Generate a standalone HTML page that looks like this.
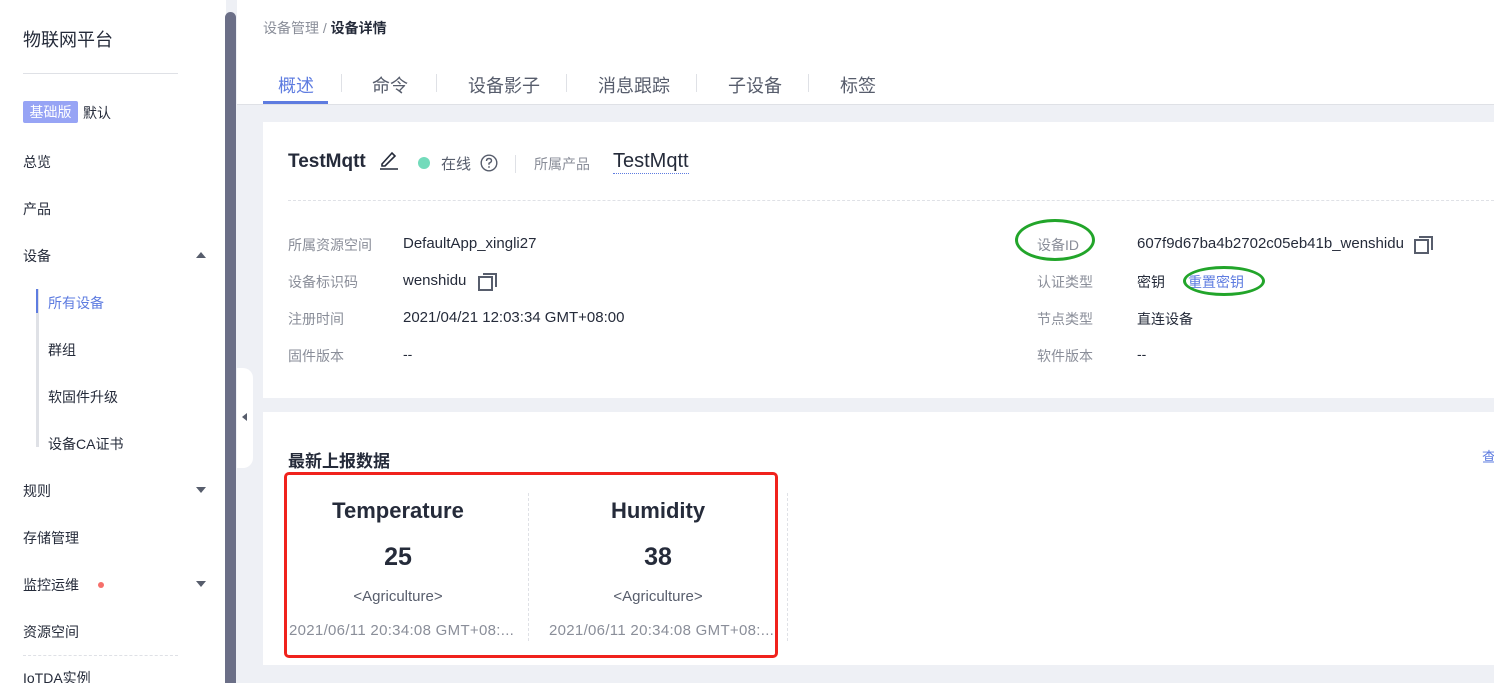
<!DOCTYPE html>
<html><head><meta charset="utf-8">
<style>
*{margin:0;padding:0;box-sizing:border-box}
html,body{width:1494px;height:683px;overflow:hidden}
body{background:#eef0f5;font-family:"Liberation Sans","Noto Sans CJK SC",sans-serif;position:relative;color:#252b3a}
.abs{position:absolute;white-space:nowrap}
.side{position:absolute;left:0;top:0;width:226px;height:683px;background:#fff}
.side .it{position:absolute;left:23px;font-size:14px;color:#252b3a}
.sub{position:absolute;left:48px;font-size:14px;color:#252b3a}
.tri{position:absolute;width:0;height:0;border-left:5px solid transparent;border-right:5px solid transparent}
.lbl{color:#8a8e99;font-size:14px}
.val{font-size:14px;color:#252b3a}
</style></head><body>
<div class="side">
  <div class="abs" style="left:23px;top:26px;font-size:18px">物联网平台</div>
  <div class="abs" style="left:23px;top:73px;width:155px;height:1px;background:#dfe1e6"></div>
  <div class="abs" style="left:23px;top:101px;height:22px;width:55px;background:#97a4f5;border-radius:2px;color:#fff;font-size:14px;line-height:22px;text-align:center">基础版</div>
  <div class="abs" style="left:83px;top:103px;font-size:14px">默认</div>
  <div class="it" style="top:152px">总览</div>
  <div class="it" style="top:199px">产品</div>
  <div class="it" style="top:246px">设备</div>
  <div class="tri" style="left:196px;top:252px;border-bottom:6px solid #575d6c"></div>
  <div class="abs" style="left:36px;top:289px;width:3px;height:158px;background:#dfe1e6"></div>
  <div class="abs" style="left:36px;top:289px;width:2px;height:24px;background:#5e7ce0"></div>
  <div class="sub" style="top:293px;color:#5e7ce0">所有设备</div>
  <div class="sub" style="top:340px">群组</div>
  <div class="sub" style="top:387px">软固件升级</div>
  <div class="sub" style="top:434px">设备CA证书</div>
  <div class="it" style="top:481px">规则</div>
  <div class="tri" style="left:196px;top:487px;border-top:6px solid #575d6c"></div>
  <div class="it" style="top:528px">存储管理</div>
  <div class="it" style="top:575px">监控运维</div>
  <div class="abs" style="left:98px;top:582px;width:6px;height:6px;border-radius:50%;background:#f66f6a"></div>
  <div class="tri" style="left:196px;top:581px;border-top:6px solid #575d6c"></div>
  <div class="it" style="top:622px">资源空间</div>
  <div class="abs" style="left:23px;top:655px;width:155px;border-top:1px dashed #dfe1e6"></div>
  <div class="it" style="top:668px">IoTDA实例</div>
</div>
<div class="abs" style="left:225px;top:12px;width:11px;height:671px;background:#6b6f87;border-radius:6px 6px 0 0"></div>
<div class="abs" style="left:237px;top:368px;width:16px;height:100px;background:#fff;border-radius:0 10px 10px 0"></div>
<div class="tri" style="left:242px;top:413px;border:none;border-top:4px solid transparent;border-bottom:4px solid transparent;border-right:5px solid #575d6c"></div>

<div class="abs" style="left:237px;top:0;width:1257px;height:105px;background:#fff;border-bottom:1px solid #dfe1e6"></div>
<div class="abs" style="left:263px;top:18px;font-size:14px;color:#8a8e99">设备管理 / <b style="color:#252b3a">设备详情</b></div>
<div class="abs" style="left:278px;top:72px;font-size:18px;color:#5e7ce0">概述</div>
<div class="abs" style="left:263px;top:101px;width:65px;height:3px;background:#5e7ce0"></div>
<div class="abs" style="left:372px;top:72px;font-size:18px;color:#575d6c">命令</div>
<div class="abs" style="left:468px;top:72px;font-size:18px;color:#575d6c">设备影子</div>
<div class="abs" style="left:598px;top:72px;font-size:18px;color:#575d6c">消息跟踪</div>
<div class="abs" style="left:728px;top:72px;font-size:18px;color:#575d6c">子设备</div>
<div class="abs" style="left:840px;top:72px;font-size:18px;color:#575d6c">标签</div>
<div class="abs" style="left:341px;top:74px;width:1px;height:18px;background:#dfe1e6"></div>
<div class="abs" style="left:436px;top:74px;width:1px;height:18px;background:#dfe1e6"></div>
<div class="abs" style="left:566px;top:74px;width:1px;height:18px;background:#dfe1e6"></div>
<div class="abs" style="left:696px;top:74px;width:1px;height:18px;background:#dfe1e6"></div>
<div class="abs" style="left:808px;top:74px;width:1px;height:18px;background:#dfe1e6"></div>

<div class="abs" style="left:263px;top:122px;width:1231px;height:276px;background:#fff"></div>
<div class="abs" style="left:288px;top:151px;font-size:19px;font-weight:bold">TestMqtt</div>
<svg class="abs" style="left:379px;top:150px" width="20" height="20" viewBox="0 0 20 20"><path d="M3 14 L13 3 L16 6 L6 16 L3 16 Z" fill="none" stroke="#252b3a" stroke-width="1.6"/><path d="M1 19 H19" stroke="#252b3a" stroke-width="1.6"/></svg>
<div class="abs" style="left:418px;top:157px;width:12px;height:12px;border-radius:50%;background:#73dbbb"></div>
<div class="abs" style="left:441px;top:153px;font-size:15px;color:#575d6c">在线</div>
<svg class="abs" style="left:480px;top:154px" width="18" height="18" viewBox="0 0 18 18"><circle cx="9" cy="9" r="7.8" fill="none" stroke="#575d6c" stroke-width="1.4"/><path d="M6.5 7 Q6.5 4.5 9 4.5 Q11.5 4.5 11.5 6.8 Q11.5 8.2 9 9.3 V10.8" fill="none" stroke="#575d6c" stroke-width="1.4"/><circle cx="9" cy="13" r="0.9" fill="#575d6c"/></svg>
<div class="abs" style="left:515px;top:155px;width:1px;height:18px;background:#dfe1e6"></div>
<div class="abs" style="left:534px;top:154px;font-size:14px;color:#8a8e99">所属产品</div>
<div class="abs" style="left:613px;top:150px;font-size:20px;border-bottom:1px dotted #5e7ce0;line-height:23px">TestMqtt</div>
<div class="abs" style="left:288px;top:200px;width:1206px;border-top:1px dashed #dfe1e6"></div>

<div class="abs lbl" style="left:288px;top:235px">所属资源空间</div>
<div class="abs val" style="left:403px;top:235px;font-size:15px">DefaultApp_xingli27</div>
<div class="abs lbl" style="left:288px;top:272px">设备标识码</div>
<div class="abs val" style="left:403px;top:272px;font-size:15px">wenshidu</div>
<svg class="abs" style="left:478px;top:272px" width="20" height="20" viewBox="0 0 20 20"><rect x="1" y="5" width="13" height="13" fill="none" stroke="#575d6c" stroke-width="2"/><path d="M5 2 H18 V15" fill="none" stroke="#575d6c" stroke-width="2"/></svg>
<div class="abs lbl" style="left:288px;top:309px">注册时间</div>
<div class="abs val" style="left:403px;top:309px;font-size:15px">2021/04/21 12:03:34 GMT+08:00</div>
<div class="abs lbl" style="left:288px;top:346px">固件版本</div>
<div class="abs val" style="left:403px;top:346px">--</div>

<div class="abs lbl" style="left:1037px;top:235px">设备ID</div>
<div class="abs val" style="left:1137px;top:235px;font-size:15px">607f9d67ba4b2702c05eb41b_wenshidu</div>
<svg class="abs" style="left:1414px;top:235px" width="20" height="20" viewBox="0 0 20 20"><rect x="1" y="5" width="13" height="13" fill="none" stroke="#575d6c" stroke-width="2"/><path d="M5 2 H18 V15" fill="none" stroke="#575d6c" stroke-width="2"/></svg>
<div class="abs lbl" style="left:1037px;top:272px">认证类型</div>
<div class="abs val" style="left:1137px;top:272px">密钥</div>
<div class="abs" style="left:1188px;top:272px;font-size:14px;color:#5e7ce0">重置密钥</div>
<div class="abs lbl" style="left:1037px;top:309px">节点类型</div>
<div class="abs val" style="left:1137px;top:309px">直连设备</div>
<div class="abs lbl" style="left:1037px;top:346px">软件版本</div>
<div class="abs val" style="left:1137px;top:346px">--</div>
<div class="abs" style="left:1015px;top:219px;width:80px;height:42px;border:3px solid #22a52a;border-radius:50%"></div>
<div class="abs" style="left:1183px;top:266px;width:82px;height:30px;border:3px solid #22a52a;border-radius:50%"></div>

<div class="abs" style="left:263px;top:412px;width:1231px;height:253px;background:#fff"></div>
<div class="abs" style="left:288px;top:447px;font-size:17px;font-weight:bold">最新上报数据</div>
<div class="abs" style="left:1482px;top:447px;font-size:14px;color:#5e7ce0">查</div>
<div class="abs" style="left:528px;top:493px;height:148px;border-left:1px dashed #dfe1e6"></div>
<div class="abs" style="left:787px;top:493px;height:148px;border-left:1px dashed #dfe1e6"></div>
<div class="abs" style="left:288px;top:498px;width:220px;text-align:center;font-size:22px;font-weight:600">Temperature</div>
<div class="abs" style="left:288px;top:543px;width:220px;text-align:center;font-size:25px;font-weight:bold">25</div>
<div class="abs" style="left:288px;top:588px;width:220px;text-align:center;font-size:15px;color:#575d6c">&lt;Agriculture&gt;</div>
<div class="abs" style="left:289px;top:622px;font-size:15px;color:#8a8e99;letter-spacing:0.3px">2021/06/11 20:34:08 GMT+08:...</div>
<div class="abs" style="left:548px;top:498px;width:220px;text-align:center;font-size:22px;font-weight:600">Humidity</div>
<div class="abs" style="left:548px;top:543px;width:220px;text-align:center;font-size:25px;font-weight:bold">38</div>
<div class="abs" style="left:548px;top:588px;width:220px;text-align:center;font-size:15px;color:#575d6c">&lt;Agriculture&gt;</div>
<div class="abs" style="left:549px;top:622px;font-size:15px;color:#8a8e99;letter-spacing:0.3px">2021/06/11 20:34:08 GMT+08:...</div>
<div class="abs" style="left:284px;top:472px;width:494px;height:186px;border:3px solid #f0221c;border-radius:5px"></div>
</body></html>
